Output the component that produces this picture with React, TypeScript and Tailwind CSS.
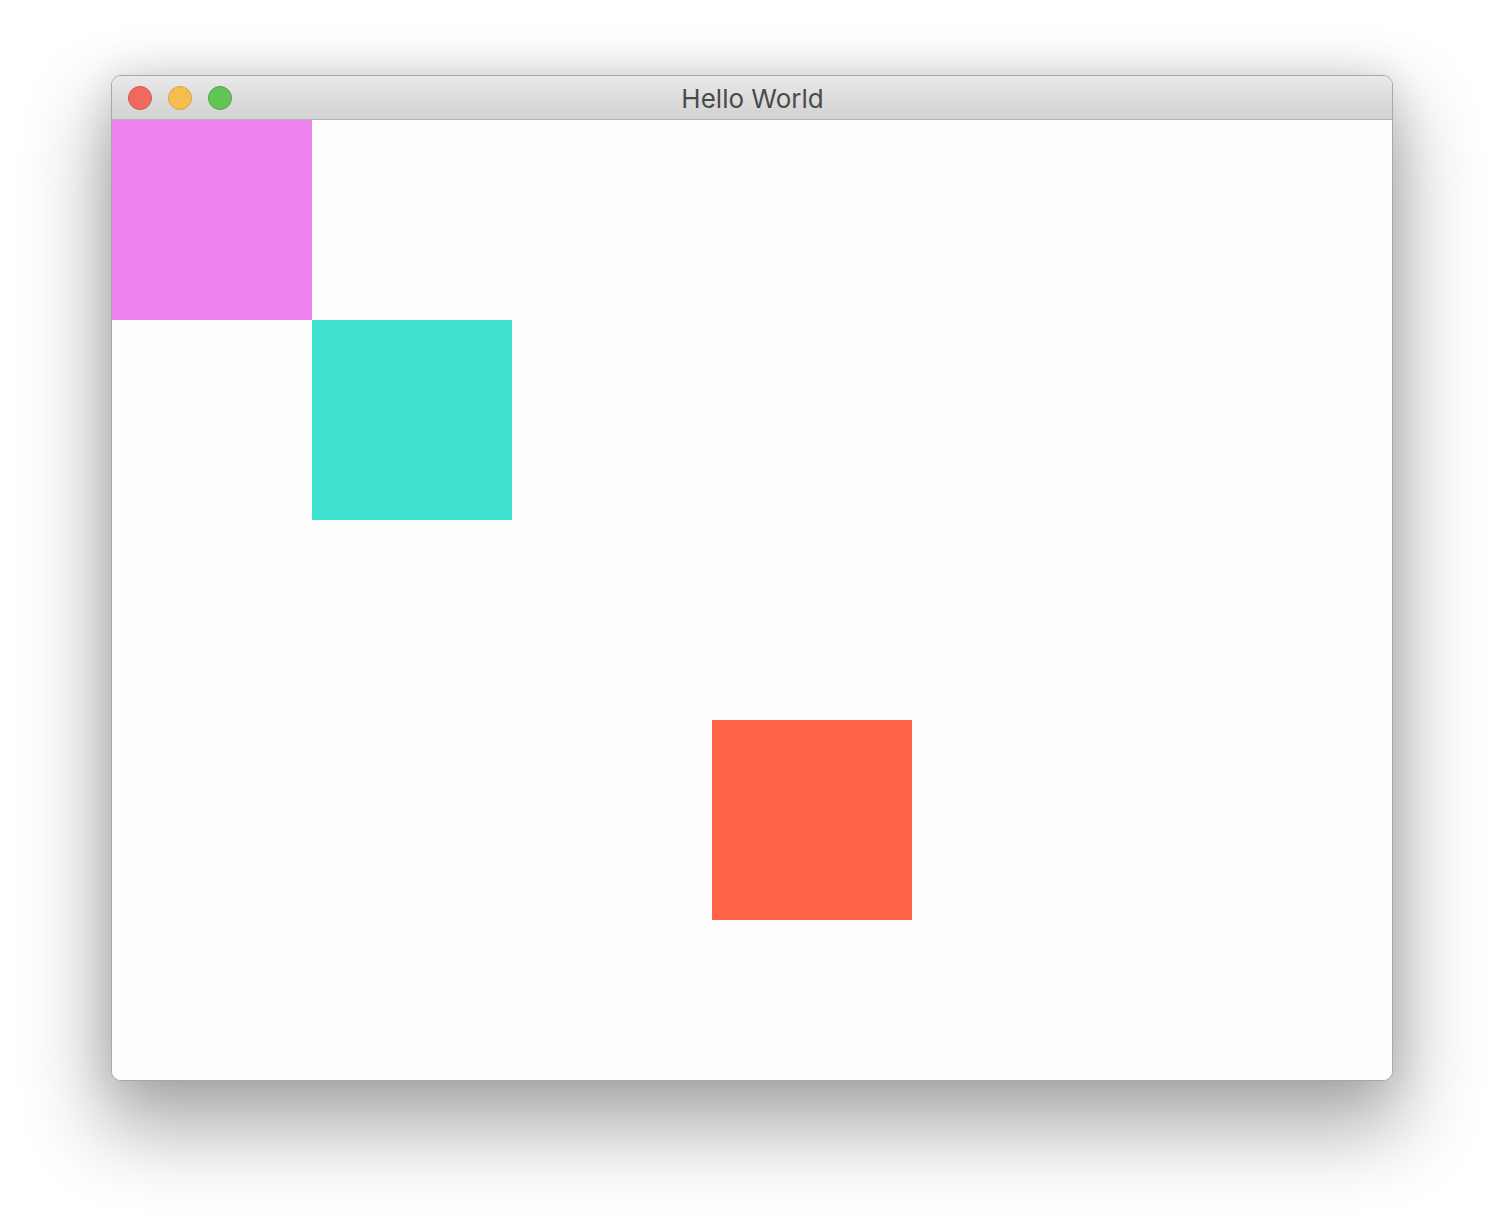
import React from "react";

export default function App() {
  return (
    <div className="w-[1504px] h-[1228px] bg-white pt-[75px] pl-[111px] overflow-hidden">
      <div className="w-[1282px] rounded-[10px] border border-[#a8a8a8] bg-white overflow-hidden shadow-[0_40px_80px_10px_rgba(0,0,0,0.32),0_0_40px_rgba(0,0,0,0.12)]">
        <div className="relative h-[44px] bg-gradient-to-b from-[#e9e9e9] to-[#d2d2d2] border-b border-[#b4b4b4] flex items-center">
          <div className="flex items-center gap-4 pl-[16px] pt-[1px]">
            <div className="w-6 h-6 rounded-full bg-[#ee6a5f] border border-[#d5554b]" />
            <div className="w-6 h-6 rounded-full bg-[#f6be50] border border-[#dea43a]" />
            <div className="w-6 h-6 rounded-full bg-[#61c454] border border-[#4ea93f]" />
          </div>
          <div className="absolute inset-0 flex items-center justify-center pl-[1px]">
            <span className="text-[26px] leading-none text-[#4a4a4a] font-['Inter','Liberation_Sans',sans-serif] pt-[3px]">
              Hello World
            </span>
          </div>
        </div>
        <div className="h-[960px] bg-[#fefefe] grid grid-cols-[200px_200px_200px_200px_1fr] grid-rows-[200px_200px_200px_200px_1fr]">
          <div className="bg-[#ee82ee]" />
          <div />
          <div />
          <div />
          <div />
          <div />
          <div className="bg-[#40e0d0]" />
          <div />
          <div />
          <div />
          <div />
          <div />
          <div />
          <div />
          <div />
          <div />
          <div />
          <div />
          <div className="bg-[#ff6347]" />
          <div />
        </div>
      </div>
    </div>
  );
}
